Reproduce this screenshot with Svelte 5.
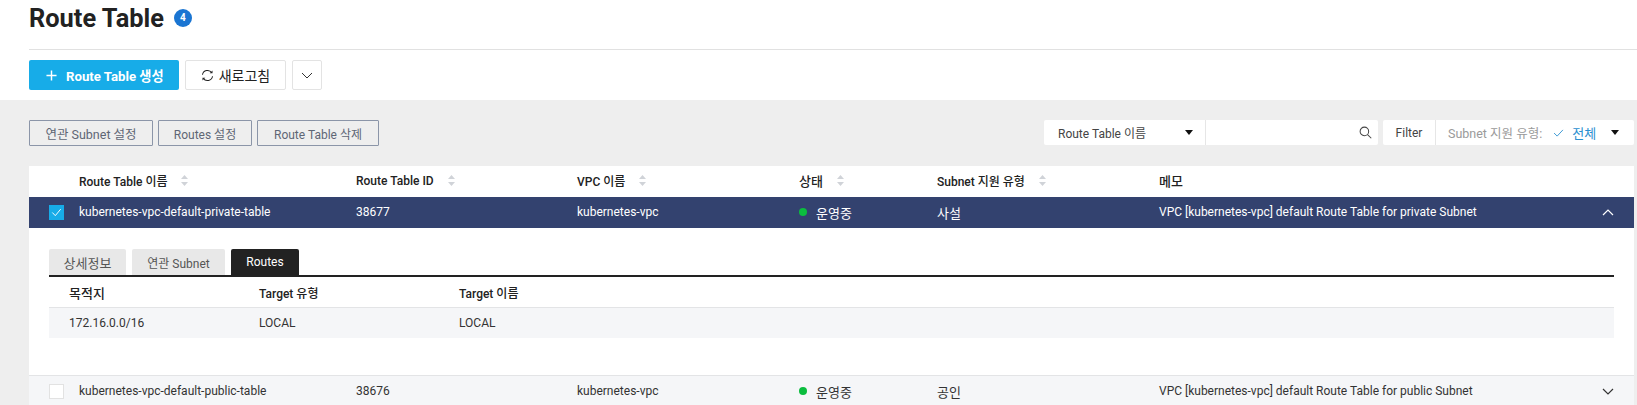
<script>
  let columns = [
    { label: 'Route Table 이름', sort: true },
    { label: 'Route Table ID', sort: true },
    { label: 'VPC 이름', sort: true },
    { label: '상태', sort: true, ko: true },
    { label: 'Subnet 지원 유형', sort: true },
    { label: '메모', sort: false, ko: true }
  ];
</script>

<div class="page">
  <header class="top">
    <div class="title-row">
      <h1>Route Table</h1>
      <span class="count">4</span>
    </div>
    <div class="actions">
      <button class="btn-create">
        <svg class="plus" viewBox="0 0 12 12"><path d="M6 .5v11M.5 6h11" /></svg>
        Route Table 생성
      </button>
      <button class="btn-white btn-refresh">
        <svg class="refresh" viewBox="0 0 14 14">
          <path d="M1.6 6.2A5.5 5.5 0 0 1 11.6 4" />
          <path d="M12.4 7.8A5.5 5.5 0 0 1 2.4 10" />
          <path class="tip" d="M12.4 1.6v3h-3zM1.6 12.4v-3h3z" />
        </svg>
        새로고침
      </button>
      <button class="btn-white btn-more">
        <svg class="chev" viewBox="0 0 12 7"><path d="M1 1l5 5 5-5" /></svg>
      </button>
    </div>
  </header>

  <main class="body">
    <div class="toolbar">
      <div class="tools-left">
        <button class="btn-line">연관 Subnet 설정</button>
        <button class="btn-line">Routes 설정</button>
        <button class="btn-line">Route Table 삭제</button>
      </div>
      <div class="tools-right">
        <div class="search">
          <div class="select">
            <span>Route Table 이름</span>
            <i class="caret"></i>
          </div>
          <div class="search-input">
            <svg class="mag" viewBox="0 0 14 14">
              <circle cx="5.8" cy="5.8" r="4.6" />
              <path d="M9.2 9.2l4 4" />
            </svg>
          </div>
        </div>
        <div class="filter">
          <span class="filter-name">Filter</span>
          <div class="filter-value">
            <span class="filter-label">Subnet 지원 유형:</span>
            <svg class="tick" viewBox="0 0 12 9"><path d="M1 4.5l3.5 3.5L11 1" /></svg>
            <span class="filter-on">전체</span>
            <i class="caret"></i>
          </div>
        </div>
      </div>
    </div>

    <div class="card">
      <div class="row head">
        <span></span>
        {#each columns as c}
          <span class="th" class:ko={c.ko}>
            {c.label}
            {#if c.sort}
              <svg class="sort" viewBox="0 0 7 11"><path d="M3.5 0L7 4H0zM3.5 11L0 7h7z" /></svg>
            {/if}
          </span>
        {/each}
        <span></span>
      </div>

      <div class="row selected">
        <span class="check on">
          <svg viewBox="0 0 14 14"><path d="M2.5 7l3.2 3.4 5.8-7" /></svg>
        </span>
        <span>kubernetes-vpc-default-private-table</span>
        <span>38677</span>
        <span>kubernetes-vpc</span>
        <span class="status ko"><i class="dot"></i>운영중</span>
        <span class="ko">사설</span>
        <span>VPC [kubernetes-vpc] default Route Table for private Subnet</span>
        <svg class="toggle up" viewBox="0 0 12 7"><path d="M1 6l5-5 5 5" /></svg>
      </div>

      <div class="detail">
        <div class="tabs">
          <span class="tab t1 ko">상세정보</span>
          <span class="tab t2">연관 Subnet</span>
          <span class="tab t3 active">Routes</span>
        </div>
        <div class="sub-row sub-head">
          <span class="ko">목적지</span>
          <span>Target 유형</span>
          <span>Target 이름</span>
        </div>
        <div class="sub-row sub-body">
          <span>172.16.0.0/16</span>
          <span>LOCAL</span>
          <span>LOCAL</span>
        </div>
      </div>

      <div class="row plain">
        <span class="check"></span>
        <span>kubernetes-vpc-default-public-table</span>
        <span>38676</span>
        <span>kubernetes-vpc</span>
        <span class="status ko"><i class="dot"></i>운영중</span>
        <span class="ko">공인</span>
        <span>VPC [kubernetes-vpc] default Route Table for public Subnet</span>
        <svg class="toggle" viewBox="0 0 12 7"><path d="M1 1l5 5 5-5" /></svg>
      </div>
    </div>
  </main>
</div>

<style>
  :global(body) {
    margin: 0;
    background: #eee;
  }

  .page {
    height: 405px;
    overflow: hidden;
    font-family: Roboto, "Noto Sans CJK KR", sans-serif;
    font-size: 12px;
    color: #333;
    display: flex;
    flex-direction: column;
  }

  /* hangul-only labels run a bit bigger in the original */
  .ko {
    font-size: 13px;
  }

  button {
    font-family: inherit;
    cursor: pointer;
    box-sizing: border-box;
  }

  /* top */
  .top {
    background: #fff;
    height: 100px;
    box-sizing: border-box;
    padding-left: 29px;
  }

  .title-row {
    height: 50px;
    border-bottom: 1px solid #e1e1e1;
    display: flex;
    align-items: flex-start;
    gap: 10px;
    padding-top: 3px;
    box-sizing: border-box;
  }

  h1 {
    margin: 0;
    font-size: 25.4px;
    line-height: 30px;
    font-weight: 700;
    color: #222;
  }

  .count {
    margin-top: 6px;
    width: 18px;
    height: 18px;
    border-radius: 50%;
    background: #1a75d2;
    color: #fff;
    font-size: 10px;
    font-weight: 700;
    line-height: 18px;
    text-align: center;
  }

  .actions {
    display: flex;
    gap: 6px;
    margin-top: 10px;
  }

  .btn-create {
    width: 150px;
    height: 30px;
    background: #17ace8;
    border: 0;
    border-radius: 2px;
    color: #fff;
    font-size: 13.2px;
    font-weight: 700;
    display: flex;
    align-items: center;
    padding: 0 0 0 17px;
    gap: 9px;
  }

  .plus {
    width: 11px;
    height: 11px;
    fill: none;
    stroke: #fff;
    stroke-width: 1.6;
  }

  .btn-white {
    height: 30px;
    background: #fff;
    border: 1px solid #e3e3e3;
    border-radius: 2px;
    color: #222;
    display: flex;
    align-items: center;
    justify-content: center;
    padding: 0;
  }

  .btn-refresh {
    width: 101px;
    gap: 5px;
    font-size: 14px;
    font-weight: 400;
  }

  .refresh {
    width: 13px;
    height: 13px;
    fill: none;
    stroke: #222;
    stroke-width: 1.1;
  }

  .refresh .tip {
    fill: #222;
    stroke: none;
  }

  .btn-more {
    width: 30px;
  }

  .chev {
    width: 12px;
    height: 7px;
    fill: none;
    stroke: #333;
    stroke-width: 1;
  }

  /* body */
  .body {
    flex: 1;
    background: #eee;
    padding: 20px 3px 0 29px;
    min-height: 0;
  }

  .toolbar {
    display: flex;
    justify-content: space-between;
    align-items: flex-start;
    height: 46px;
  }

  .tools-left {
    display: flex;
    gap: 5px;
  }

  .btn-line {
    height: 26px;
    background: #eee;
    border: 1px solid #8b95a8;
    border-radius: 1px;
    color: #5e6675;
    font-size: 12px;
    padding: 0;
  }

  .btn-line:nth-child(1) { width: 124px; font-size: 12.5px; }
  .btn-line:nth-child(2) { width: 94px; }
  .btn-line:nth-child(3) { width: 122px; }

  .tools-right {
    display: flex;
    gap: 5px;
  }

  .search, .filter {
    display: flex;
    height: 25px;
    background: #fff;
    border-radius: 2px;
  }

  .select {
    width: 162px;
    box-sizing: border-box;
    padding: 0 12px 0 14px;
    display: flex;
    align-items: center;
    justify-content: space-between;
    border-right: 1px solid #e6e6e6;
    color: #444;
  }

  .caret {
    width: 0;
    height: 0;
    border-left: 4px solid transparent;
    border-right: 4px solid transparent;
    border-top: 5px solid #111;
  }

  .search-input {
    width: 172px;
    box-sizing: border-box;
    display: flex;
    align-items: center;
    justify-content: flex-end;
    padding-right: 6px;
  }

  .mag {
    width: 13px;
    height: 13px;
    fill: none;
    stroke: #444;
    stroke-width: 1.1;
  }

  .filter-name {
    width: 52px;
    display: flex;
    align-items: center;
    justify-content: center;
    border-right: 1px solid #e6e6e6;
    color: #444;
  }

  .filter-value {
    width: 198px;
    box-sizing: border-box;
    padding: 0 15px 0 12px;
    display: flex;
    align-items: center;
    color: #9a9a9a;
  }

  .filter-label {
    font-size: 12.5px;
  }

  .tick {
    width: 11px;
    height: 8px;
    margin-left: 11px;
    fill: none;
    stroke: #2b8fd0;
    stroke-width: 1;
  }

  .filter-on {
    margin-left: 8px;
    color: #2b8fd0;
    font-size: 13px;
  }

  .filter-value .caret {
    margin-left: auto;
  }

  /* table */
  .card {
    background: #fff;
    height: 239px;
  }

  .row {
    display: grid;
    grid-template-columns: 50px 277px 221px 222px 138px 222px 1fr 52px;
    align-items: center;
    height: 31px;
    box-sizing: border-box;
    white-space: nowrap;
  }

  .head {
    font-weight: 500;
    color: #222;
    padding-bottom: 2px;
  }

  .th {
    display: flex;
    align-items: center;
    gap: 14px;
  }

  .sort {
    width: 7px;
    height: 11px;
    fill: #d0d3d8;
  }

  .selected {
    background: #33426f;
    color: #fff;
    padding-bottom: 1px;
  }

  .check {
    width: 13px;
    height: 13px;
    margin-left: 20px;
    background: #fff;
    border: 1px solid #e2e2e2;
    display: block;
  }

  .check.on {
    background: #17ace8;
    border-color: #17ace8;
  }

  .check svg {
    display: block;
    fill: none;
    stroke: #fff;
    stroke-width: 1;
  }

  .status {
    display: flex;
    align-items: center;
    gap: 9px;
  }

  .dot {
    width: 8px;
    height: 8px;
    border-radius: 50%;
    background: #0bbd3e;
  }

  .toggle {
    width: 12px;
    height: 7px;
    justify-self: center;
    fill: none;
    stroke: #333;
    stroke-width: 1.2;
  }

  .toggle.up {
    stroke: #fff;
  }

  .detail {
    height: 147px;
    box-sizing: border-box;
    padding: 21px 20px 0;
  }

  .tabs {
    display: flex;
    gap: 6px;
    height: 28px;
    box-sizing: border-box;
    border-bottom: 2px solid #222;
  }

  .tab {
    background: #e8e8e8;
    color: #555;
    border-radius: 2px 2px 0 0;
    display: flex;
    align-items: center;
    justify-content: center;
  }

  .t1 { width: 77px; }
  .t2 { width: 93px; }
  .t3 { width: 68px; }

  .tab.active {
    background: #222;
    color: #fff;
  }

  .sub-row {
    display: grid;
    grid-template-columns: 190px 200px 1fr;
    align-items: center;
    padding-left: 20px;
  }

  .sub-head {
    height: 31px;
    border-bottom: 1px solid #e3e4e6;
    box-sizing: border-box;
    font-weight: 500;
    color: #222;
  }

  .sub-body {
    height: 30px;
    background: #f5f6f8;
  }

  .plain {
    background: #f5f6f8;
    border-top: 1px solid #e3e4e6;
  }
</style>
